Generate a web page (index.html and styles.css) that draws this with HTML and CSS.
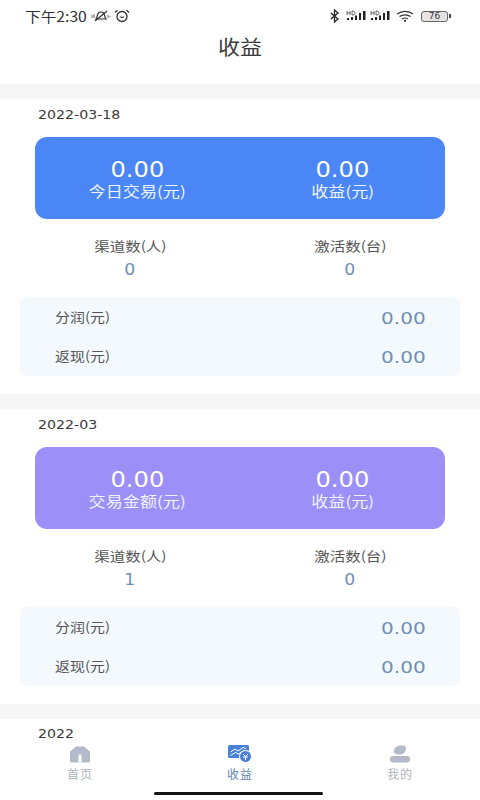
FILE: index.html
```html
<!DOCTYPE html>
<html lang="zh-CN">
<head>
<meta charset="utf-8">
<title>收益</title>
<link rel="stylesheet" href="styles.css">
</head>
<body>
<div class="page">
  <header class="top">
    <div class="status">
      <div class="status-left">
        <span class="clock">下午2:30</span>
        <svg class="ic-mute" viewBox="0 0 20 12" width="20" height="12"><path d="M5 9c1-1 1-2 1.500-4S8.500 2 10 2s3 1 3.500 3S14 8 15 9Z" fill="none" stroke="#333" stroke-width="1.200"/><path d="M4 11 16 1" stroke="#333" stroke-width="1.200"/><path d="M1 5v3M3 4v4M17 5v3M19 6v1" stroke="#666"/></svg>
        <svg class="ic-alarm" viewBox="0 0 16 14" width="16" height="14"><circle cx="8" cy="7.500" r="5" fill="none" stroke="#333" stroke-width="1.300"/><path d="M1 3.500 3.500 1.200M15 3.500 12.500 1.200" stroke="#333" stroke-width="1.300"/><path d="M5.800 7.500c.8 1.200 3.600 1.200 4.400 0" fill="none" stroke="#333" stroke-width="1.100"/></svg>
      </div>
      <div class="status-right">
        <svg class="ic-bt" viewBox="0 0 10 14" width="10" height="14"><path d="M1 4l7 6-3.500 3V1L8 4 1 10" fill="none" stroke="#222" stroke-width="1.300"/></svg>
        <svg viewBox="0 0 20 12" width="20" height="12"><path d="M1 8h2v2H1zM5 7h2v3H5zM9 5.500h2V10H9zM13 3h2v7h-2zM17 1h2.500v9H17z" fill="#222"/><path d="M1 1v4M4 1v4M1 3h3M6 1v4c2 0 3-.5 3-2S8 1 6 1Z" fill="none" stroke="#444" stroke-width=".8"/></svg>
        <svg viewBox="0 0 20 12" width="20" height="12"><path d="M1 8h2v2H1zM5 7h2v3H5zM9 5.500h2V10H9zM13 3h2v7h-2zM17 1h2.500v9H17z" fill="#222"/><path d="M1 1v4M4 1v4M1 3h3M6 1v4c2 0 3-.5 3-2S8 1 6 1Z" fill="none" stroke="#444" stroke-width=".8"/></svg>
        <svg class="ic-wifi" viewBox="0 0 18 12" width="18" height="12"><path d="M1 4c4.500-3.500 11.500-3.500 16 0M3.500 6.500c3-2.300 8-2.300 11 0M6 9c1.800-1.200 4.200-1.200 6 0" fill="none" stroke="#333" stroke-width="1.200"/><circle cx="9" cy="10.800" r="1.100" fill="#222"/></svg>
        <span class="battery"><span class="battery-num">76</span></span><span class="battery-tip"></span>
      </div>
    </div>
    <h1 class="title">收益</h1>
  </header>

  <section class="block">
    <div class="date">2022-03-18</div>
    <div class="card card-blue">
      <div class="card-col"><span class="card-num">0.00</span><span class="card-label">今日交易(元)</span></div>
      <div class="card-col"><span class="card-num">0.00</span><span class="card-label">收益(元)</span></div>
    </div>
    <div class="stats">
      <div class="stat"><span class="stat-label">渠道数(人)</span><span class="stat-num">0</span></div>
      <div class="stat"><span class="stat-label">激活数(台)</span><span class="stat-num">0</span></div>
    </div>
    <div class="panel">
      <div class="row"><span class="row-label">分润(元)</span><span class="row-num">0.00</span></div>
      <div class="row"><span class="row-label">返现(元)</span><span class="row-num">0.00</span></div>
    </div>
  </section>

  <section class="block">
    <div class="date">2022-03</div>
    <div class="card card-purple">
      <div class="card-col"><span class="card-num">0.00</span><span class="card-label">交易金额(元)</span></div>
      <div class="card-col"><span class="card-num">0.00</span><span class="card-label">收益(元)</span></div>
    </div>
    <div class="stats">
      <div class="stat"><span class="stat-label">渠道数(人)</span><span class="stat-num">1</span></div>
      <div class="stat"><span class="stat-label">激活数(台)</span><span class="stat-num">0</span></div>
    </div>
    <div class="panel">
      <div class="row"><span class="row-label">分润(元)</span><span class="row-num">0.00</span></div>
      <div class="row"><span class="row-label">返现(元)</span><span class="row-num">0.00</span></div>
    </div>
  </section>

  <section class="block block-last">
    <div class="date">2022</div>
  </section>

  <nav class="tabbar">
    <div class="tab">
      <svg viewBox="0 0 20 17" width="20" height="18"><path d="M0 6 6 1h8l6 5v9.500a1.500 1.500 0 0 1-1.500 1.500h-17A1.500 1.500 0 0 1 0 15.500Z" fill="#b4bac9"/><rect x="8.500" y="9" width="3" height="8" fill="#fff"/></svg>
      <span>首页</span>
    </div>
    <div class="tab tab-on">
      <svg viewBox="0 0 24 18" width="24" height="18"><rect x="0" y="0" width="21" height="13" rx="1.500" fill="#4a80d8"/><path d="M2.500 7 7 4l3 2 5-3.500 3 1M2.500 10.500l5-3 3 1.500 5-3" fill="none" stroke="#fff" stroke-width="1"/><circle cx="17.500" cy="11.500" r="6.500" fill="#fff"/><circle cx="17.500" cy="11.500" r="5.500" fill="#4a80d8"/><path d="M15.300 9.300 17.500 11.500 19.700 9.300M15 12h5M17.500 11.500V15" stroke="#fff" stroke-width="1" fill="none"/></svg>
      <span>收益</span>
    </div>
    <div class="tab">
      <svg viewBox="0 0 20 17" width="20" height="18"><path d="M4 5.500C4 2 7 0 12 0c3 0 4.500 1 4 3.500-.5 3.500-3 5.500-7 5.500-3 0-5-1-5-3.500Z" fill="#b4bac9"/><rect x="0" y="10.500" width="20" height="6.500" rx="3.200" fill="#b4bac9"/></svg>
      <span>我的</span>
    </div>
    <div class="home-bar"></div>
  </nav>
</div>
</body>
</html>
```
FILE: styles.css
```css
* { box-sizing: border-box; margin: 0; padding: 0; }
html, body { height: 100%; }
body {
  background: #f6f6f6;
  font-family: "Noto Sans CJK SC", "Noto Sans", sans-serif;
  color: #333;
  overflow: hidden;
}
.page { position: relative; height: 800px; overflow: hidden; display: flex; flex-direction: column; gap: 15px; }

.top { background: #fff; height: 84px; flex: none; padding: 7px 25px 0; }
.status { display: flex; justify-content: space-between; align-items: center; height: 18px; }
.status-left, .status-right { display: flex; align-items: center; }
.status-left { gap: 3px; }
.status-right { gap: 4px; margin-right: 4px; }
.clock { font-size: 14px; line-height: 18px; color: #333; margin-right: 8px; transform: scaleX(1.120); transform-origin: left center; }
.ic-bt { margin-right: 2px; }
.ic-wifi { margin: 0 3px 0 2px; }
.battery { width: 27px; height: 11px; border: 1px solid #666; border-radius: 3px; background: #e4e4e4; display: flex; align-items: center; justify-content: center; }
.battery-num { font-size: 9px; line-height: 9px; color: #333; font-family: "DejaVu Sans", sans-serif; }
.battery-tip { width: 2px; height: 4px; background: #444; margin-left: -3px; }
.title { width: max-content; margin: 8px auto 0; font-size: 20px; font-weight: 400; line-height: 28px; color: #3a3a3a; transform: scaleX(1.100); }

.block { background: #fff; height: 295px; flex: none; padding: 7px 0 0; }
.block-last { height: 100px; padding-top: 6px; }
.date { font-family: "DejaVu Sans", sans-serif; font-size: 13px; line-height: 18px; padding-left: 38px; color: #3a3a3a; transform: scaleX(1.090); transform-origin: 38px 0; }
.card { margin: 13px 35px 0; height: 82px; border-radius: 12px; display: grid; grid-template-columns: 1fr 1fr; color: #fff; padding: 21px 0 0; }
.card-blue { background: #4a86f5; }
.card-purple { background: #9d8ff8; }
.card-col { display: flex; flex-direction: column; align-items: center; }
.card-num { font-family: "DejaVu Sans", sans-serif; font-size: 21px; line-height: 24px; transform: scaleX(1.150); }
.card-label { font-size: 14.500px; line-height: 20px; margin-top: -1px; color: #eef4ff; transform: scaleX(1.180); }

.stats { display: grid; grid-template-columns: 1fr 1fr; padding: 18px 20px 0; }
.stat { display: flex; flex-direction: column; align-items: center; }
.stat-label { font-size: 13px; line-height: 18px; color: #555; transform: scaleX(1.190); }
.stat-num { font-family: "DejaVu Sans", sans-serif; font-size: 15px; line-height: 20px; margin-top: 5px; color: #6f8fb5; transform: scaleX(1.150); }

.panel { margin: 17px 20px 0; height: 79px; background: #f4f9fe; border-radius: 6px; padding: 2px 34px 0 35px; }
.row { display: flex; justify-content: space-between; align-items: center; height: 39px; }
.row-label { font-size: 13px; margin-bottom: 4px; color: #555; transform: scaleX(1.150); transform-origin: left center; }
.row-num { font-family: "DejaVu Sans", sans-serif; font-size: 16px; color: #6f8fb5; transform: scaleX(1.250); transform-origin: right center; }

.tabbar { position: absolute; left: 0; right: 0; bottom: 0; height: 58px; background: #fff; display: grid; grid-template-columns: repeat(3, 1fr); padding-top: 3px; }
.tab { display: flex; flex-direction: column; align-items: center; font-size: 12px; color: #b0b4bc; letter-spacing: 1px; }
.tab span { line-height: 18px; margin-top: 2px; }
.tab-on { color: #5f87b5; }
.home-bar { position: absolute; left: 154px; bottom: 5px; width: 169px; height: 3px; background: #111; border-radius: 2px; }
```
